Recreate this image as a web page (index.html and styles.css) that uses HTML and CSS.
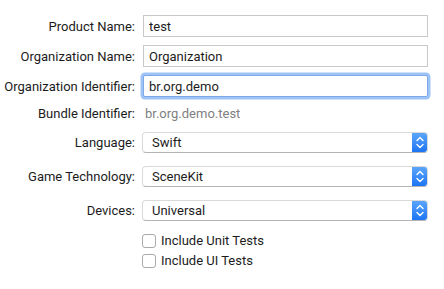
FILE: index.html
```html
<!DOCTYPE html>
<html lang="en">
<head>
    <meta charset="UTF-8">
    <title>Choose options for your new project</title>
    <link rel="stylesheet" href="styles.css">
</head>
<body>
<div class="form">
    <!-- Text fields -->
    <div class="row">
        <label class="label">Product Name:</label>
        <input class="field" type="text" value="test">
    </div>
    <div class="row">
        <label class="label">Organization Name:</label>
        <input class="field" type="text" value="Organization">
    </div>
    <div class="row row-focus">
        <label class="label">Organization Identifier:</label>
        <input class="field focused" type="text" value="br.org.demo">
    </div>
    <div class="row row-static">
        <span class="label">Bundle Identifier:</span>
        <span class="static">br.org.demo.test</span>
    </div>

    <!-- Popups -->
    <div class="row row-popup">
        <span class="label">Language:</span>
        <div class="popup">
            <span class="popup-value">Swift</span>
            <span class="popup-btn">
                <svg width="16" height="21" viewBox="0 0 16 21"><path d="M5 8.5 8 5.5 11 8.5M5 12.5 8 15.5 11 12.5" fill="none" stroke="#fff" stroke-width="1.4" stroke-linecap="round" stroke-linejoin="round"/></svg>
            </span>
        </div>
    </div>
    <div class="row row-popup">
        <span class="label">Game Technology:</span>
        <div class="popup">
            <span class="popup-value">SceneKit</span>
            <span class="popup-btn">
                <svg width="16" height="21" viewBox="0 0 16 21"><path d="M5 8.5 8 5.5 11 8.5M5 12.5 8 15.5 11 12.5" fill="none" stroke="#fff" stroke-width="1.4" stroke-linecap="round" stroke-linejoin="round"/></svg>
            </span>
        </div>
    </div>
    <div class="row row-popup">
        <span class="label">Devices:</span>
        <div class="popup">
            <span class="popup-value">Universal</span>
            <span class="popup-btn">
                <svg width="16" height="21" viewBox="0 0 16 21"><path d="M5 8.5 8 5.5 11 8.5M5 12.5 8 15.5 11 12.5" fill="none" stroke="#fff" stroke-width="1.4" stroke-linecap="round" stroke-linejoin="round"/></svg>
            </span>
        </div>
    </div>

    <!-- Checkboxes -->
    <div class="row row-check">
        <span></span>
        <label class="check"><span class="box"></span>Include Unit Tests</label>
    </div>
    <div class="row row-check">
        <span></span>
        <label class="check"><span class="box"></span>Include UI Tests</label>
    </div>
</div>
</body>
</html>
```

FILE: styles.css
```css
body {
    margin: 0;
    background: #ffffff;
    color: #1c1c1c;
    font-family: Roboto, "Liberation Sans", sans-serif;
    font-size: 13px;
}

.form {
    display: flex;
    flex-direction: column;
    padding-top: 15px;
}

.row {
    display: grid;
    grid-template-columns: 135px 285px;
    column-gap: 8px;
    align-items: center;
    height: 22px;
    margin-bottom: 8px;
}

.label {
    text-align: right;
    white-space: nowrap;
}

.field {
    box-sizing: border-box;
    height: 22px;
    width: 100%;
    margin: 0;
    padding: 0 5px;
    border: 1px solid #c9c9c9;
    border-radius: 0;
    font: inherit;
    color: #1c1c1c;
    outline: none;
}

.field.focused {
    border-color: #7ea8e6;
    border-radius: 2px;
    box-shadow: 0 0 0 2.5px #9dc4f6;
}

.row-static {
    margin-top: -3px;
    margin-bottom: 8px;
}

.static {
    color: #7f7f7f;
    padding-left: 2px;
}

.row-popup {
    height: 21px;
    margin-bottom: 13px;
}

.popup {
    display: flex;
    align-items: center;
    box-sizing: border-box;
    height: 21px;
    margin-left: -1px;
    border: 1px solid #d9d9d9;
    border-bottom-color: #b4b4b4;
    border-radius: 4px;
    background: #ffffff;
    overflow: hidden;
}

.popup-value {
    flex: 1;
    padding-left: 9px;
}

.popup-btn {
    display: flex;
    width: 16px;
    height: 21px;
    margin: -1px -1px -1px 0;
    background: linear-gradient(#5ea8fb, #1a72f3);
    border-radius: 0 4px 4px 0;
}

.row-check {
    height: 14px;
    line-height: 14px;
    margin-bottom: 6px;
}

.check {
    display: flex;
    align-items: center;
    gap: 5px;
    margin-left: -1px;
    height: 14px;
}

.box {
    box-sizing: border-box;
    width: 14px;
    height: 14px;
    border: 1px solid #a9a9a9;
    border-radius: 3px;
    background: #ffffff;
}
```
